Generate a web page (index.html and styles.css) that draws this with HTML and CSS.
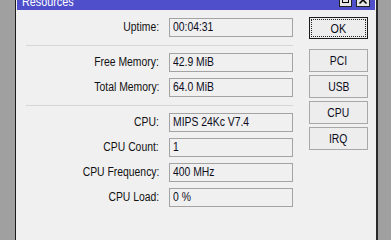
FILE: index.html
```html
<!DOCTYPE html>
<html>
<head>
<meta charset="utf-8">
<link rel="stylesheet" href="styles.css">
</head>
<body>
<div class="win">
  <div class="titlebar">
    <span class="title"><span class="t">Resources</span></span>
    <span class="tbtns">
      <svg class="tbtn" width="13" height="14" viewBox="0 0 13 14"><rect x="0.5" y="0.5" width="12" height="13" fill="#e6e6e6" stroke="#202020"/><rect x="3.5" y="3.5" width="6" height="6" fill="none" stroke="#000"/><line x1="3" y1="4.5" x2="10" y2="4.5" stroke="#000"/></svg>
      <svg class="tbtn" width="14" height="14" viewBox="0 0 14 14"><rect x="0.5" y="0.5" width="13" height="13" fill="#e6e6e6" stroke="#202020"/><path d="M3.5 3.5 L10.5 10.5 M10.5 3.5 L3.5 10.5" stroke="#000" stroke-width="1.6"/></svg>
    </span>
  </div>
  <div class="body">
    <div class="form">
      <div class="row"><span class="lbl"><span class="t">Uptime:</span></span><span class="fld"><span class="t">00:04:31</span></span></div>
      <div class="sep"></div>
      <div class="row"><span class="lbl"><span class="t">Free Memory:</span></span><span class="fld"><span class="t">42.9 MiB</span></span></div>
      <div class="row"><span class="lbl"><span class="t">Total Memory:</span></span><span class="fld"><span class="t">64.0 MiB</span></span></div>
      <div class="sep"></div>
      <div class="row"><span class="lbl"><span class="t">CPU:</span></span><span class="fld"><span class="t">MIPS 24Kc V7.4</span></span></div>
      <div class="row"><span class="lbl"><span class="t">CPU Count:</span></span><span class="fld"><span class="t">1</span></span></div>
      <div class="row"><span class="lbl"><span class="t">CPU Frequency:</span></span><span class="fld"><span class="t">400 MHz</span></span></div>
      <div class="row"><span class="lbl"><span class="t">CPU Load:</span></span><span class="fld"><span class="t">0 %</span></span></div>
    </div>
    <div class="btns">
      <div class="btn ok"><span class="focus"><span class="t">OK</span></span></div>
      <div class="group">
        <div class="btn"><span class="t">PCI</span></div>
        <div class="btn"><span class="t">USB</span></div>
        <div class="btn"><span class="t">CPU</span></div>
        <div class="btn"><span class="t">IRQ</span></div>
      </div>
    </div>
  </div>
</div>
</body>
</html>
```
FILE: styles.css
```css
html, body {
  margin: 0;
  padding: 0;
  height: 100%;
  overflow: hidden;
}
body {
  background: #a0a0a0;
  font-family: "Liberation Sans", Arial, sans-serif;
  font-size: 12.5px;
  color: #111;
}
.t {
  display: inline-block;
  transform: scaleX(0.83);
  white-space: nowrap;
}
.win {
  margin-left: 15px;
  width: 358px;
  min-height: 100vh;
  padding: 0 1px;
  border-left: 1px solid #1c1c1c;
  border-right: 2px solid #2a2a2a;
  background: #f0f0f0;
}
.titlebar {
  height: 10px;
  background: #4f4fcb;
  display: flex;
  overflow: hidden;
}
.title {
  color: #fff;
  padding-left: 5px;
  line-height: 10px;
  margin-top: -3px;
  font-size: 13px;
}
.title .t {
  transform-origin: left center;
}
.tbtns {
  margin-left: auto;
  margin-right: 5px;
  display: flex;
  gap: 4px;
  margin-top: -7px;
}
.tbtn {
  display: block;
}
.body {
  display: flex;
}
.form {
  margin-left: 9px;
  width: 267px;
  padding-top: 8px;
  display: flex;
  flex-direction: column;
  gap: 6px;
}
.row {
  display: flex;
  height: 19px;
  gap: 10px;
}
.lbl {
  flex: 1;
  text-align: right;
  line-height: 19px;
  white-space: nowrap;
}
.lbl .t {
  transform-origin: right center;
}
.fld {
  width: 124px;
  height: 19px;
  box-sizing: border-box;
  border: 1px solid #a3a3a3;
  padding-left: 3px;
  line-height: 17px;
  white-space: nowrap;
  color: #0c0c1a;
}
.fld .t {
  transform-origin: left center;
}
.sep {
  height: 0;
  border-top: 1px solid #d6d6d6;
  margin: 2px 0 1px;
}
.btns {
  margin-left: 16px;
  width: 59px;
  padding-top: 7px;
}
.btn {
  height: 23px;
  box-sizing: border-box;
  border: 1px solid #a8a8a8;
  background: #ededed;
  display: flex;
  align-items: center;
  justify-content: center;
  color: #0c0c1a;
}
.btn.ok {
  height: 22px;
  border-color: #1a1a1a;
  padding: 1px;
}
.focus {
  flex: 1;
  align-self: stretch;
  border: 1px dotted #222;
  display: flex;
  align-items: center;
  justify-content: center;
  font-size: 13px;
}
.group {
  margin-top: 10px;
  display: flex;
  flex-direction: column;
  gap: 3px;
}
```
